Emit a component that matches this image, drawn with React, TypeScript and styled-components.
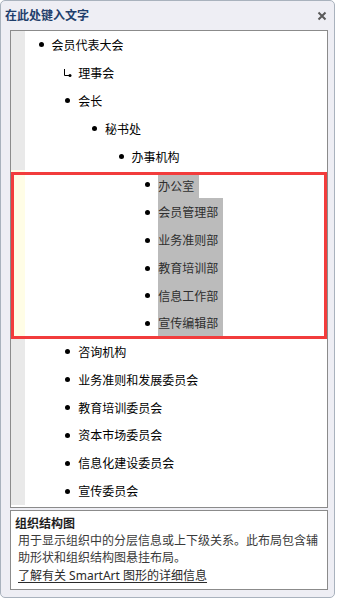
import { createGlobalStyle } from "styled-components";
import styled from "styled-components";

const ROW_HEIGHT = 27.9;
const INDENT = 26.7;

const GlobalStyle = createGlobalStyle`
  body {
    margin: 0;
    background: #ffffff;
    font-family: "Noto Sans", "Noto Sans CJK SC", sans-serif;
  }
`;

const Window = styled.div`
  box-sizing: border-box;
  width: 335px;
  height: 598px;
  border: 1px solid #a9b2bd;
  border-radius: 5px;
  background: #eeeef4;
  padding: 0 6px 7px 9px;
  display: flex;
  flex-direction: column;
`;

const TitleBar = styled.div`
  height: 29px;
  margin-left: -5px;
  display: flex;
  align-items: center;
  justify-content: space-between;
`;

const Title = styled.div`
  font-family: "Noto Sans CJK SC", sans-serif;
  font-size: 12px;
  font-weight: 700;
  color: #1f3f6c;
  line-height: 16px;
  margin-top: -1px;
`;

const CloseButton = styled.div`
  width: 10px;
  height: 10px;
  margin-right: 1px;
  display: flex;
  align-items: center;
  justify-content: center;
`;

const Pane = styled.div`
  position: relative;
  box-sizing: border-box;
  height: 478px;
  border: 1px solid #8b8b8b;
  background: #ffffff;
`;

const Row = styled.div`
  display: flex;
  align-items: center;
  height: ${ROW_HEIGHT}px;
  font-family: "Noto Sans CJK SC", sans-serif;
  font-size: 12px;
  color: #000000;
`;

const Gutter = styled.div<{ $selected: boolean }>`
  width: 14px;
  align-self: stretch;
  background: ${(p) => (p.$selected ? "#fffde6" : "#e9e9e9")};
`;

const Entry = styled.div<{ $level: number }>`
  display: flex;
  align-items: center;
  align-self: stretch;
  padding-left: ${(p) => 13.5 + INDENT * (p.$level - 1)}px;
`;

const Bullet = styled.span`
  width: 5px;
  height: 5px;
  border-radius: 50%;
  background: #000000;
  margin-right: 8px;
  flex: none;
`;

const Hook = styled.svg`
  margin-left: -2px;
  margin-right: 6px;
  flex: none;
`;

const Label = styled.span<{ $highlight: boolean; $first: boolean; $last: boolean }>`
  align-self: stretch;
  display: flex;
  align-items: center;
  padding-right: ${(p) => (p.$highlight ? "5px" : "0")};
  margin-top: ${(p) => (p.$first ? "4px" : "0")};
  margin-bottom: ${(p) => (p.$last ? "2px" : "0")};
  background: ${(p) => (p.$highlight ? "#bbbbbb" : "transparent")};
  color: ${(p) => (p.$highlight ? "#2e2e2e" : "#000000")};
  line-height: 16px;
`;

const Annotation = styled.div`
  position: absolute;
  left: 0;
  top: 141px;
  width: 316px;
  height: 167px;
  box-sizing: border-box;
  border: 3px solid #f23c3c;
  pointer-events: none;
`;

const Description = styled.div`
  box-sizing: border-box;
  height: 80px;
  margin-top: 2px;
  border: 1px solid #8b8b8b;
  background: #ffffff;
  padding: 3px 4px 0 4px;
  font-family: "Noto Sans", "Noto Sans CJK SC", sans-serif;
  font-size: 12px;
  line-height: 17px;
  color: #3a3a3a;
`;

const DescTitle = styled.div`
  font-family: "Noto Sans CJK SC", sans-serif;
  font-weight: 700;
  color: #1e1e1e;
`;

const DescText = styled.div`
  padding-left: 3px;
  font-family: "Noto Sans CJK SC", sans-serif;
`;

const DescLink = styled.a`
  display: block;
  margin-top: 2px;
  padding-left: 3px;
  color: #2a2a2a;
  text-decoration: underline;
  text-underline-offset: 2px;
`;

type Item = { text: string; level: number; hook?: boolean; selected?: boolean };

const items: Item[] = [
  { text: "会员代表大会", level: 1 },
  { text: "理事会", level: 2, hook: true },
  { text: "会长", level: 2 },
  { text: "秘书处", level: 3 },
  { text: "办事机构", level: 4 },
  { text: "办公室", level: 5, selected: true },
  { text: "会员管理部", level: 5, selected: true },
  { text: "业务准则部", level: 5, selected: true },
  { text: "教育培训部", level: 5, selected: true },
  { text: "信息工作部", level: 5, selected: true },
  { text: "宣传编辑部", level: 5, selected: true },
  { text: "咨询机构", level: 2 },
  { text: "业务准则和发展委员会", level: 2 },
  { text: "教育培训委员会", level: 2 },
  { text: "资本市场委员会", level: 2 },
  { text: "信息化建设委员会", level: 2 },
  { text: "宣传委员会", level: 2 },
];

export default function App() {
  const firstSel = items.findIndex((i) => i.selected);
  const lastSel = items.length - 1 - [...items].reverse().findIndex((i) => i.selected);

  return (
    <>
      <GlobalStyle />
      <Window>
        <TitleBar>
          <Title>在此处键入文字</Title>
          <CloseButton>
            <svg width="10" height="10" viewBox="0 0 10 10">
              <path d="M1.5 1.5 L8.5 8.5 M8.5 1.5 L1.5 8.5" stroke="#5a5a5a" strokeWidth="2" />
            </svg>
          </CloseButton>
        </TitleBar>

        <Pane>
          {items.map((item, i) => (
            <Row key={i}>
              <Gutter $selected={!!item.selected} />
              <Entry $level={item.level}>
                {item.hook ? (
                  <Hook width="9" height="8" viewBox="0 0 9 8">
                    <path d="M1.5 0 V6.5 H6" stroke="#000" strokeWidth="1" fill="none" />
                    <circle cx="7" cy="6.5" r="1.5" fill="#000" />
                  </Hook>
                ) : (
                  <Bullet />
                )}
                <Label
                  $highlight={!!item.selected}
                  $first={i === firstSel}
                  $last={i === lastSel}
                >
                  {item.text}
                </Label>
              </Entry>
            </Row>
          ))}
          <Annotation />
        </Pane>

        <Description>
          <DescTitle>组织结构图</DescTitle>
          <DescText>用于显示组织中的分层信息或上下级关系。此布局包含辅</DescText>
          <DescText>助形状和组织结构图悬挂布局。</DescText>
          <DescLink>了解有关 SmartArt 图形的详细信息</DescLink>
        </Description>
      </Window>
    </>
  );
}
